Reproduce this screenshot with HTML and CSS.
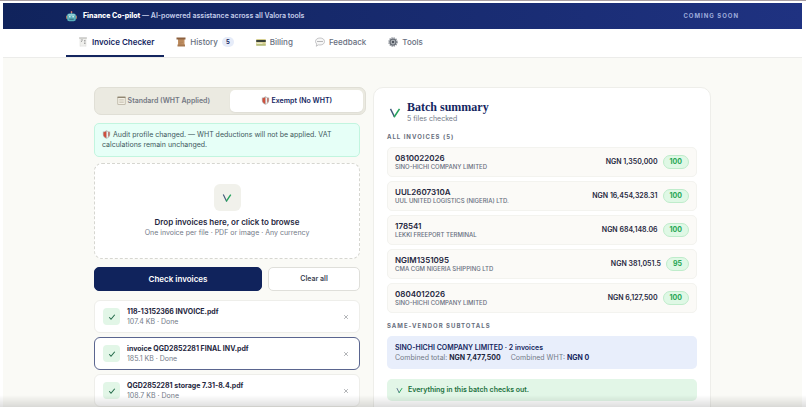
FILE: index.html
```html
<!DOCTYPE html>
<html lang="en">
<head>
    <meta charset="UTF-8">
    <meta name="viewport" content="width=device-width, initial-scale=1.0">
    <title>Invoice Checker</title>
    <link rel="stylesheet" href="styles.css">
</head>
<body>
    <!-- shared shapes -->
    <svg class="sprite" aria-hidden="true">
        <symbol id="shield" viewBox="0 0 16 16">
            <path d="M8 0.5C6 2 4 2.600 1.500 2.800V8c0 3.600 2.500 6 6.500 7.700 4-1.700 6.500-4.100 6.500-7.700V2.800C12 2.600 10 2 8 0.500z" fill="#b9b3b1"/>
            <path d="M7.500 2C6 3 4.500 3.700 2.800 3.900V8c0 3 1.700 4.900 4.700 6.200z" fill="#cf4f3c"/>
            <path d="M8.500 2v12.200c1.200-.5 2-1.100 2.800-1.900V3.400C10.300 3 9.400 2.600 8.500 2z" fill="#eef0f1"/>
            <path d="M11.300 3.500v8.800c1.200-1.100 1.900-2.500 1.900-4.300V3.900z" fill="#bd5647"/>
        </symbol>
        <symbol id="vmark" viewBox="0 0 16 16">
            <path d="M2 2.500 7.500 13.500" fill="none" stroke="#3f5878" stroke-width="1.800"/>
            <path d="M6.800 13.500 14 2.500" fill="none" stroke="#25a35c" stroke-width="2.200"/>
        </symbol>
        <symbol id="tick" viewBox="0 0 16 16">
            <path d="M2.500 8.500 6 12.500 13.500 3.500" fill="none" stroke="#256b4b" stroke-width="2.200"/>
        </symbol>
        <symbol id="cross" viewBox="0 0 16 16">
            <path d="M3 3 13 13M13 3 3 13" fill="none" stroke="#a3a5a9" stroke-width="2.200"/>
        </symbol>
    </svg>

    <header class="banner">
        <div class="container banner-inner">
            <svg class="robot" viewBox="0 0 20 20" aria-hidden="true">
                <path d="M10 1v4" stroke="#9fb4c4" stroke-width="2"/>
                <circle cx="10" cy="2" r="1.600" fill="#e07b63"/>
                <rect x="0.500" y="8" width="3" height="6" rx="1" fill="#e0976b"/>
                <rect x="16.500" y="8" width="3" height="6" rx="1" fill="#e0976b"/>
                <rect x="2" y="4.500" width="16" height="14" rx="4" fill="#58aebb"/>
                <rect x="4" y="5.500" width="12" height="3" rx="1" fill="#8fd0d6"/>
                <circle cx="7" cy="10.500" r="1.500" fill="#e8f6f8"/>
                <circle cx="13" cy="10.500" r="1.500" fill="#e8f6f8"/>
                <path d="M6 15h8" stroke="#2f6b80" stroke-width="2"/>
            </svg>
            <p class="banner-text"><strong>Finance Co-pilot</strong> — AI-powered assistance across all Valora tools</p>
            <span class="soon">COMING SOON</span>
        </div>
    </header>

    <nav class="tabs">
        <div class="container tabs-inner">
            <a href="#" class="tab active">
                <svg class="tab-icon" viewBox="0 0 20 20" aria-hidden="true">
                    <path d="M4 2h12v17l-2-1.500-2 1.500-2-1.500L8 19l-2-1.500L4 19z" fill="#f0f0ed" stroke="#dadad7"/>
                    <path d="M2 2h16" stroke="#b5b5b2" stroke-width="2"/>
                    <path d="M6 6h4M6 9h2M12 7h3M12 10h3M12 13h3" stroke="#8f8f8f" stroke-width="1.500"/>
                </svg>
                Invoice Checker
            </a>
            <a href="#" class="tab">
                <svg class="tab-icon" viewBox="0 0 20 20" aria-hidden="true">
                    <path d="M4 3h13v14H4z" fill="#c08f62"/>
                    <path d="M1 1h18v4H1z" fill="#8c603f"/>
                    <path d="M3 15h15v4H3z" fill="#a67850"/>
                    <path d="M6 8h8M6 11h8M6 13.500h5" stroke="#a77a50"/>
                </svg>
                History <span class="count">5</span>
            </a>
            <a href="#" class="tab">
                <svg class="tab-icon" viewBox="0 0 20 20" aria-hidden="true">
                    <rect x="0.500" y="4" width="19" height="13" rx="1" fill="#d6cf91"/>
                    <path d="M0.500 6h19v4h-19z" fill="#394139"/>
                    <path d="M2 12.500h11" stroke="#f3f1dc" stroke-width="2"/>
                    <path d="M0.500 16h19" stroke="#9fae62" stroke-width="2"/>
                </svg>
                Billing
            </a>
            <a href="#" class="tab">
                <svg class="tab-icon" viewBox="0 0 20 20" aria-hidden="true">
                    <path d="M10 2c5.500 0 9 2.800 9 7s-3.500 7-9 7c-1 0-2-.1-3-.3L2.500 18.500l1-4.500C2 12.800 1 11 1 9c0-4.200 3.500-7 9-7z" fill="#f7f7f7" stroke="#aaaaad" stroke-width="1.300"/>
                    <path d="M5 9h2M9 9h2M13 9h2" stroke="#77777b" stroke-width="2"/>
                </svg>
                Feedback
            </a>
            <a href="#" class="tab">
                <svg class="tab-icon" viewBox="0 0 20 20" aria-hidden="true">
                    <circle cx="10" cy="10" r="8" fill="none" stroke="#858a93" stroke-width="3" stroke-dasharray="2.500 1.700"/>
                    <circle cx="10" cy="10" r="6" fill="#b4b8bd" stroke="#686e77" stroke-width="2.500"/>
                    <circle cx="10" cy="10" r="2.500" fill="#4e545e"/>
                </svg>
                Tools
            </a>
        </div>
    </nav>

    <main class="page">
        <div class="container columns">
            <section class="upload">
                <div class="segment">
                    <button type="button" class="segment-btn">
                        <svg class="icon" viewBox="0 0 16 16" aria-hidden="true">
                            <rect x="1.500" y="1.500" width="13" height="13.500" fill="#f3f0e5" stroke="#a49b87"/>
                            <path d="M1 2.500h14" stroke="#8e8370" stroke-width="2"/>
                            <path d="M4 6.500h8M4 9h8M4 11.500h8" stroke="#b7b0a2"/>
                        </svg>
                        Standard (WHT Applied)
                    </button>
                    <button type="button" class="segment-btn selected">
                        <svg class="icon" aria-hidden="true"><use href="#shield"/></svg>
                        Exempt (No WHT)
                    </button>
                </div>

                <p class="notice">
                    <svg class="icon" aria-hidden="true"><use href="#shield"/></svg>
                    Audit profile changed. — WHT deductions will not be applied. VAT calculations remain unchanged.
                </p>

                <label class="dropzone" for="invoiceFiles">
                    <input type="file" id="invoiceFiles" class="file-input" multiple>
                    <span class="drop-icon"><svg aria-hidden="true"><use href="#vmark"/></svg></span>
                    <span class="drop-title">Drop invoices here, or click to browse</span>
                    <span class="drop-hint">One invoice per file · PDF or image · Any currency</span>
                </label>

                <div class="actions">
                    <button type="button" class="btn btn-primary">Check invoices</button>
                    <button type="button" class="btn">Clear all</button>
                </div>

                <ul class="files">
                    <li class="file">
                        <span class="file-status"><svg aria-hidden="true"><use href="#tick"/></svg></span>
                        <div class="file-info">
                            <div class="file-name">118-13152366 INVOICE.pdf</div>
                            <div class="file-meta">107.4 KB · Done</div>
                        </div>
                        <button type="button" class="remove" aria-label="Remove"><svg aria-hidden="true"><use href="#cross"/></svg></button>
                    </li>
                    <li class="file current">
                        <span class="file-status"><svg aria-hidden="true"><use href="#tick"/></svg></span>
                        <div class="file-info">
                            <div class="file-name">invoice QGD2852281 FINAL INV.pdf</div>
                            <div class="file-meta">185.1 KB · Done</div>
                        </div>
                        <button type="button" class="remove" aria-label="Remove"><svg aria-hidden="true"><use href="#cross"/></svg></button>
                    </li>
                    <li class="file">
                        <span class="file-status"><svg aria-hidden="true"><use href="#tick"/></svg></span>
                        <div class="file-info">
                            <div class="file-name">QGD2852281 storage 7.31-8.4.pdf</div>
                            <div class="file-meta">108.7 KB · Done</div>
                        </div>
                        <button type="button" class="remove" aria-label="Remove"><svg aria-hidden="true"><use href="#cross"/></svg></button>
                    </li>
                </ul>
            </section>

            <section class="summary">
                <div class="summary-head">
                    <svg class="summary-icon" aria-hidden="true"><use href="#vmark"/></svg>
                    <div>
                        <h1>Batch summary</h1>
                        <p class="summary-sub">5 files checked</p>
                    </div>
                </div>

                <h2>ALL INVOICES (5)</h2>
                <ul class="invoices">
                    <li class="invoice">
                        <div class="invoice-info">
                            <div class="invoice-no">0810022026</div>
                            <div class="vendor">SINO-HICHI COMPANY LIMITED</div>
                        </div>
                        <span class="amount">NGN 1,350,000</span>
                        <span class="score">100</span>
                    </li>
                    <li class="invoice">
                        <div class="invoice-info">
                            <div class="invoice-no">UUL2607310A</div>
                            <div class="vendor">UUL UNITED LOGISTICS (NIGERIA) LTD.</div>
                        </div>
                        <span class="amount">NGN 16,454,328.31</span>
                        <span class="score">100</span>
                    </li>
                    <li class="invoice">
                        <div class="invoice-info">
                            <div class="invoice-no">178541</div>
                            <div class="vendor">LEKKI FREEPORT TERMINAL</div>
                        </div>
                        <span class="amount">NGN 684,148.06</span>
                        <span class="score">100</span>
                    </li>
                    <li class="invoice">
                        <div class="invoice-info">
                            <div class="invoice-no">NGIM1351095</div>
                            <div class="vendor">CMA CGM NIGERIA SHIPPING LTD</div>
                        </div>
                        <span class="amount">NGN 381,051.5</span>
                        <span class="score">95</span>
                    </li>
                    <li class="invoice">
                        <div class="invoice-info">
                            <div class="invoice-no">0804012026</div>
                            <div class="vendor">SINO-HICHI COMPANY LIMITED</div>
                        </div>
                        <span class="amount">NGN 6,127,500</span>
                        <span class="score">100</span>
                    </li>
                </ul>

                <h2>SAME-VENDOR SUBTOTALS</h2>
                <div class="subtotal">
                    <div class="subtotal-name">SINO-HICHI COMPANY LIMITED · 2 invoices</div>
                    <div class="subtotal-row">
                        <span>Combined total: <strong>NGN 7,477,500</strong></span>
                        <span>Combined WHT: <strong class="wht">NGN 0</strong></span>
                    </div>
                </div>

                <div class="all-good">
                    <svg aria-hidden="true"><use href="#vmark"/></svg>
                    Everything in this batch checks out.
                </div>
            </section>
        </div>
    </main>
</body>
</html>
```

FILE: styles.css
```css
* {
    margin: 0;
    padding: 0;
}
body {
    font-family: Inter, "Liberation Sans", sans-serif;
    font-size: 7px;
    line-height: 10px;
    color: #1f2740;
    background: white;
    border-top: 1px solid #aaa0a3;
    padding: 2px 4px 0 3px;
    overflow: hidden;
}
/* fade along the bottom of the window */
body::after {
    content: "";
    position: fixed;
    left: 0;
    right: 0;
    bottom: 0;
    height: 12px;
    background: linear-gradient(rgba(0, 0, 0, 0), rgba(0, 0, 0, 0.13));
    pointer-events: none;
}
ul {
    list-style: none;
}
button {
    font: inherit;
    cursor: pointer;
}
.sprite {
    display: none;
}
.icon {
    width: 9px;
    height: 9px;
    vertical-align: -2px;
}
.container {
    max-width: 673px;
    margin: 0 auto;
}

/* banner */
.banner {
    background: linear-gradient(90deg, #10235c, #1f3281);
    color: #c6cfeb;
}
.banner-inner {
    display: flex;
    align-items: center;
    height: 26px;
}
.robot {
    width: 11px;
    height: 11px;
    margin-right: 6px;
}
.banner-text {
    flex: 1;
    font-weight: 600;
}
.banner-text strong {
    color: white;
    font-weight: 800;
}
.soon {
    color: #9eacdb;
    font-size: 6px;
    font-weight: 700;
    letter-spacing: 1px;
}

/* tabs */
.tabs {
    border-bottom: 1px solid #ececea;
}
.tabs-inner {
    display: flex;
}
.tab {
    display: flex;
    align-items: center;
    height: 26px;
    padding: 0 10px 0 12px;
    border-bottom: 2px solid transparent;
    color: #686f80;
    font-size: 8px;
    font-weight: 500;
    text-decoration: none;
}
.tab.active {
    color: #14265f;
    border-bottom-color: #14265f;
    font-weight: 600;
}
.tab-icon {
    width: 10px;
    height: 10px;
    margin-right: 4px;
}
.count {
    margin-left: 4px;
    padding: 0 4px;
    border-radius: 5px;
    background: #e6ecf9;
    color: #14265f;
    font-size: 6px;
    font-weight: 700;
}

/* layout */
.page {
    background: #fafaf6;
    padding-top: 29px;
}
.columns {
    display: grid;
    grid-template-columns: 266fr 338fr;
    gap: 13px;
    box-sizing: border-box;
    padding: 0 28px;
}

/* upload column */
.segment {
    display: flex;
    width: 100%;
    padding: 2px;
    border: 1px solid #e0dfd6;
    border-radius: 7px;
    background: #ebeae1;
    margin-bottom: 8px;
}
.segment-btn {
    flex: 1;
    height: 22px;
    border: none;
    border-radius: 5px;
    background: none;
    color: #737883;
    font-weight: 600;
}
.segment-btn.selected {
    background: white;
    color: #14265f;
    box-shadow: 0 1px 2px rgba(0, 0, 0, 0.06);
}
.notice {
    padding: 6px 7px;
    border: 1px solid #c2f5df;
    border-radius: 5px;
    background: #e6fff7;
    color: #40585c;
    margin-bottom: 6px;
}
.dropzone {
    display: flex;
    flex-direction: column;
    align-items: center;
    padding: 20px 10px;
    border: 1px dashed #d6d6d0;
    border-radius: 8px;
    background: white;
    margin-bottom: 8px;
    cursor: pointer;
}
.file-input {
    position: absolute;
    width: 1px;
    height: 1px;
    opacity: 0;
}
.drop-icon {
    display: flex;
    align-items: center;
    justify-content: center;
    width: 27px;
    height: 27px;
    border-radius: 6px;
    background: #f1f1eb;
    margin-bottom: 6px;
}
.drop-icon svg {
    width: 10px;
    height: 10px;
}
.drop-title {
    font-size: 8px;
    font-weight: 600;
    line-height: 11px;
}
.drop-hint {
    color: #737a88;
}
.actions {
    display: grid;
    grid-template-columns: 168fr 92fr;
    gap: 6px;
    margin-bottom: 9px;
}
.btn {
    height: 24px;
    border: 1px solid #dfdfda;
    border-radius: 5px;
    background: white;
    color: #3c4352;
    font-weight: 600;
}
.btn-primary {
    border-color: #10235c;
    background: #10235c;
    color: white;
    font-size: 8px;
}
.file {
    display: flex;
    align-items: center;
    box-sizing: border-box;
    height: 33px;
    padding: 0 8px;
    border: 1px solid #eeeeea;
    border-radius: 6px;
    background: white;
    margin-bottom: 4px;
}
.file.current {
    border-color: #5a658f;
}
.file-status {
    display: flex;
    align-items: center;
    justify-content: center;
    width: 17px;
    height: 17px;
    border-radius: 4px;
    background: #e2f6e7;
    margin-right: 7px;
}
.file-status svg {
    width: 8px;
    height: 8px;
}
.file-info {
    flex: 1;
}
.file-name {
    font-weight: 700;
}
.file-meta {
    color: #737a88;
}
.remove {
    display: flex;
    padding: 2px;
    border: none;
    background: none;
}
.remove svg {
    width: 6px;
    height: 6px;
}

/* summary card */
.summary {
    border: 1px solid #eeeeea;
    border-radius: 10px;
    background: white;
    padding: 13px;
}
.summary-head {
    display: flex;
    align-items: center;
    margin-bottom: 8px;
}
.summary-icon {
    width: 12px;
    height: 12px;
    margin: 0 6px 0 2px;
}
h1 {
    color: #14265f;
    font-family: "Liberation Serif", serif;
    font-size: 12px;
    line-height: 13px;
}
.summary-sub {
    color: #737a88;
}
h2 {
    color: #686f7e;
    font-size: 6px;
    font-weight: 700;
    letter-spacing: 1px;
    margin-bottom: 5px;
}
.invoices {
    display: grid;
    gap: 4px;
    margin-bottom: 8px;
}
.invoice {
    display: flex;
    align-items: center;
    box-sizing: border-box;
    height: 30px;
    padding: 0 7px;
    border: 1px solid #f3f3ef;
    border-radius: 5px;
    background: #fbfaf7;
}
.invoice-info {
    flex: 1;
}
.invoice-no {
    font-size: 8px;
    font-weight: 600;
    line-height: 9px;
}
.vendor {
    color: #686f7e;
    font-size: 6px;
    font-weight: 500;
    line-height: 8px;
}
.amount {
    font-weight: 600;
    margin-right: 5px;
}
.score {
    padding: 1px 6px;
    border: 1px solid #bfeccb;
    border-radius: 7px;
    background: #dff8e5;
    color: #26a653;
    font-weight: 700;
}
.subtotal {
    padding: 6px 8px;
    border-radius: 5px;
    background: #e8eefb;
    margin-bottom: 10px;
}
.subtotal-name {
    color: #14265f;
    font-weight: 600;
    line-height: 11px;
}
.subtotal-row {
    display: flex;
    gap: 10px;
    color: #737a88;
}
.subtotal-row strong {
    color: #1f2740;
}
.subtotal-row .wht {
    color: #14265f;
}
.all-good {
    display: flex;
    align-items: center;
    padding: 6px 9px;
    border-radius: 5px;
    background: #e2f6e7;
    color: #1c7140;
    font-weight: 600;
    margin-bottom: 10px;
}
.all-good svg {
    width: 7px;
    height: 7px;
    margin-right: 5px;
}
```
